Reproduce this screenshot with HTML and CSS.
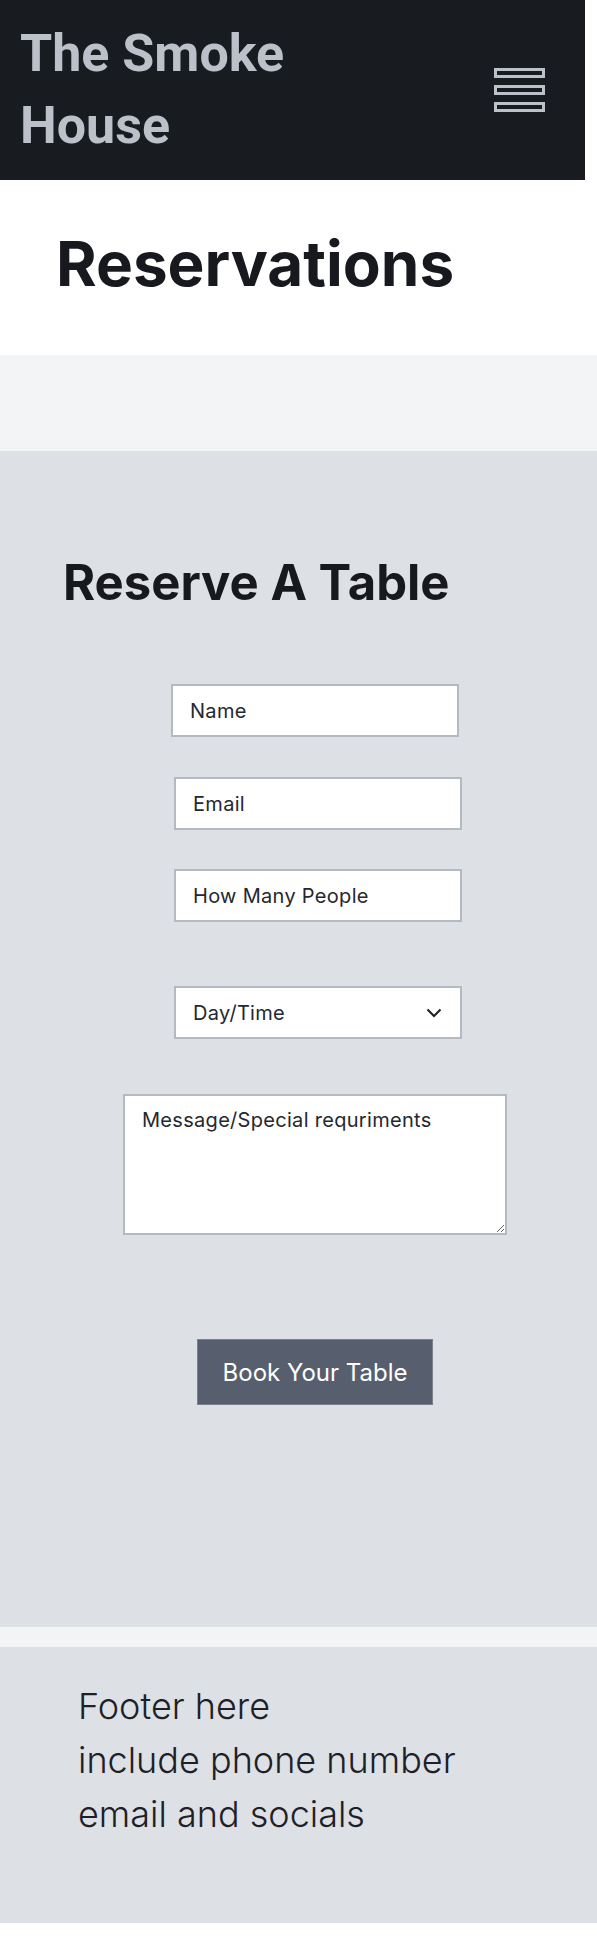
FILE: index.html
```html
<!DOCTYPE html>
<html lang="en">
<head>
<meta charset="utf-8">
<title>The Smoke House - Reservations</title>
<link rel="stylesheet" href="styles.css">
</head>
<body>
<header class="topbar">
  <div class="brand">The Smoke<br>House</div>
  <button class="menu-btn" type="button" aria-label="Menu">
    <svg width="51" height="44" viewBox="0 0 51 44">
      <rect x="1.5" y="1.5" width="48" height="7" fill="none" stroke="#bcc0c9" stroke-width="3"/>
      <rect x="1.5" y="18.5" width="48" height="7" fill="none" stroke="#bcc0c9" stroke-width="3"/>
      <rect x="1.5" y="35.5" width="48" height="7" fill="none" stroke="#bcc0c9" stroke-width="3"/>
    </svg>
  </button>
</header>

<section class="page-title">
  <h1>Reservations</h1>
</section>

<div class="band band-top"></div>

<main class="reserve">
  <h2>Reserve A Table</h2>
  <form class="reserve-form">
    <input class="field field-name" type="text" placeholder="Name">
    <input class="field field-shift field-email" type="email" placeholder="Email">
    <input class="field field-shift field-people" type="text" placeholder="How Many People">
    <div class="select-wrap field-shift">
      <select class="field field-select">
        <option>Day/Time</option>
      </select>
      <svg class="chevron" width="16" height="10" viewBox="0 0 16 10">
        <path d="M1.5 1.5 L8 8 L14.5 1.5" fill="none" stroke="#1c1e22" stroke-width="2"/>
      </svg>
    </div>
    <textarea class="field field-message" placeholder="Message/Special requriments"></textarea>
    <button class="book-btn" type="button">Book Your Table</button>
  </form>
</main>

<div class="band band-bottom"></div>

<footer class="footer">
  <p>Footer here<br>include phone number<br>email and socials</p>
</footer>
</body>
</html>
```

FILE: styles.css
```css
* {
  box-sizing: border-box;
}

html, body {
  margin: 0;
  padding: 0;
  background: #ffffff;
}

body {
  font-family: Inter, "Noto Sans", sans-serif;
  color: #18191e;
  width: 597px;
}

.topbar {
  width: 585px;
  height: 180px;
  background: #181b20;
  display: flex;
  align-items: center;
  justify-content: space-between;
  padding: 0 40px 0 20px;
}

.brand {
  font-family: Roboto, "Liberation Sans", sans-serif;
  font-weight: 700;
  font-size: 52px;
  line-height: 72px;
  color: #bcc0c9;
}

.menu-btn {
  background: none;
  border: 0;
  padding: 0;
  margin: 0;
  display: flex;
}

.page-title {
  height: 175px;
  background: #ffffff;
  padding: 48px 0 0 56px;
}

.page-title h1 {
  margin: 0;
  font-size: 62px;
  line-height: 72px;
  font-weight: 700;
  color: #18191e;
}

.band {
  background: #f3f4f6;
}

.band-top {
  height: 96px;
}

.band-bottom {
  height: 20px;
}

.reserve {
  background: #dde0e5;
  height: 1176px;
  padding: 102px 0 0 0;
}

.reserve h2 {
  margin: 0 0 0 63px;
  font-size: 49px;
  line-height: 60px;
  font-weight: 700;
  color: #18191e;
}

.reserve-form {
  display: flex;
  flex-direction: column;
  align-items: center;
  padding-left: 33px;
  margin-top: 71px;
}

.field {
  font-family: Inter, "Noto Sans", sans-serif;
  font-size: 20px;
  letter-spacing: 0.3px;
  color: #25282e;
  background: #ffffff;
  border: 2px solid #b5b9c1;
  border-radius: 0;
  outline: none;
  margin: 0;
}

.field::placeholder {
  color: #25282e;
  opacity: 1;
}

.field-name,
.field-email,
.field-people,
.field-select {
  width: 288px;
  height: 53px;
  padding: 0 17px;
}

.field-shift {
  margin-left: 6px;
}

.field-email {
  margin-top: 40px;
}

.field-people {
  margin-top: 39px;
}

.select-wrap {
  position: relative;
  margin-top: 64px;
}

.field-select {
  display: block;
  appearance: none;
  -webkit-appearance: none;
}

.chevron {
  position: absolute;
  right: 20px;
  top: 22px;
  pointer-events: none;
}

.field-message {
  display: block;
  width: 384px;
  height: 141px;
  margin-top: 55px;
  padding: 11px 17px;
  line-height: 26px;
  resize: both;
}

.book-btn {
  margin-top: 104px;
  width: 236px;
  height: 66px;
  background: #575e6d;
  color: #ffffff;
  border: 1px solid #7b808b;
  border-radius: 0;
  font-family: Inter, "Noto Sans", sans-serif;
  font-size: 24px;
  padding: 0;
}

.footer {
  background: #dde0e5;
  height: 276px;
  padding: 32px 0 0 78px;
}

.footer p {
  margin: 0;
  font-size: 36px;
  line-height: 54px;
  font-weight: 300;
  color: #1d2026;
}
```
